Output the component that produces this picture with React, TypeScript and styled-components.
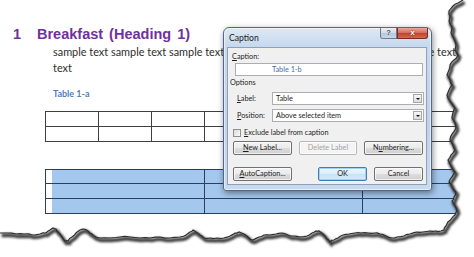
import React from "react";
import styled, { createGlobalStyle } from "styled-components";

const GlobalStyle = createGlobalStyle`
  html, body { margin: 0; padding: 0; background: #fff; }
  body { font-family: Lato, "Liberation Sans", sans-serif; }
`;

type Pt = [number, number];

const rightEdge: Pt[] = [
  [463, 0], [458, 3], [453, 6], [449, 11], [450, 16], [449, 21], [452, 27], [451, 33], [454, 39],
  [456, 45], [455, 50], [458, 55], [454, 60], [450, 65], [449, 70], [447, 75], [450, 80], [452, 85],
  [449, 90], [447, 95], [450, 101], [455, 108], [453, 113], [452, 118], [455, 123], [456, 128],
  [452, 134], [450, 140], [453, 145], [455, 150], [451, 155], [448, 160], [451, 166], [455, 172],
  [452, 177], [449, 182], [452, 187], [456, 192], [454, 197], [452, 201], [455, 206], [457, 211],
  [455, 215], [452, 218], [448, 222], [446, 226], [444, 230], [441, 231],
];

const bottomEdge: Pt[] = [
  [436, 231], [430, 231], [423, 232], [417, 232], [410, 234], [404, 236], [397, 237], [392, 238],
  [386, 236], [380, 234], [375, 233], [368, 233], [361, 233], [355, 233], [349, 234], [343, 235],
  [338, 238], [334, 240], [330, 242], [327, 239], [323, 234], [319, 231], [316, 231], [312, 233],
  [307, 236], [300, 237], [294, 236], [288, 235], [282, 233], [276, 234], [270, 235], [264, 235],
  [259, 237], [253, 240], [249, 238], [244, 234], [239, 232], [235, 233], [230, 236], [224, 238],
  [217, 238], [210, 238], [204, 238], [200, 235], [196, 232], [193, 230], [190, 232], [186, 235],
  [180, 237], [170, 238], [160, 237], [150, 238], [140, 238], [130, 237], [120, 237], [110, 238],
  [100, 238], [96, 237], [92, 234], [88, 231], [84, 229], [80, 230], [76, 233], [72, 237],
  [68, 241], [65, 241], [62, 237], [59, 233], [56, 229], [53, 228], [50, 230], [46, 233],
  [40, 234], [32, 235], [24, 234], [16, 234], [8, 233], [0, 233],
];

// densify with a small deterministic roughness so the edge looks torn
const roughen = (pts: Pt[]): Pt[] => {
  const out: Pt[] = [];
  let seed = 7;
  const rnd = () => {
    seed = (seed * 9301 + 49297) % 233280;
    return seed / 233280 - 0.5;
  };
  for (let i = 0; i < pts.length - 1; i++) {
    const [x1, y1] = pts[i];
    const [x2, y2] = pts[i + 1];
    out.push([x1, y1]);
    out.push([(x1 + x2) / 2 + rnd() * 1.2, (y1 + y2) / 2 + rnd() * 1.2]);
  }
  out.push(pts[pts.length - 1]);
  return out;
};

const edge = roughen([...rightEdge, ...bottomEdge]);
const clipPolygon = `polygon(0px 0px, ${edge.map(([x, y]) => `${x.toFixed(1)}px ${y.toFixed(1)}px`).join(", ")})`;
const edgePath = "M" + edge.map(([x, y]) => `${x.toFixed(1)} ${y.toFixed(1)}`).join(" L");

const Canvas = styled.div`
  position: relative;
  width: 474px;
  height: 257px;
  overflow: hidden;
  background: #fff;
`;

const Paper = styled.div<{ $clip: string }>`
  width: 474px;
  height: 257px;
  box-sizing: border-box;
  padding-top: 25px;
  display: flex;
  flex-direction: column;
  align-items: flex-start;
  background: #fff;
  clip-path: ${(p) => p.$clip};
`;

const Heading = styled.h1`
  margin: 0;
  padding-left: 13px;
  display: flex;
  font: bold 14.5px/18px "Liberation Sans", Arial, sans-serif;
  color: #7030a0;
  word-spacing: 2px;
  white-space: nowrap;
`;

const HeadingNumber = styled.span`
  width: 24px;
`;

const BodyText = styled.p`
  margin: 1px 0 0 53px;
  width: 412px;
  font: 10.9px/16px Lato, "Liberation Sans", sans-serif;
  color: #2e2e2e;
`;

const TableCaption = styled.div`
  margin: 12px 0 0 53px;
  font: bold 9px/12px Lato, "Liberation Sans", sans-serif;
  color: #4f81bd;
`;

const GridTable = styled.div<{ $cols: string; $rows: string; $line: string; $top: number }>`
  display: grid;
  grid-template-columns: ${(p) => p.$cols};
  grid-template-rows: ${(p) => p.$rows};
  gap: 1px;
  padding: 1px;
  margin: ${(p) => p.$top}px 0 0 45px;
  background: ${(p) => p.$line};
`;

const Cell = styled.div<{ $selected?: boolean; $gutter?: boolean }>`
  background: ${(p) =>
    !p.$selected ? "#fff" : p.$gutter ? "linear-gradient(to right, #fff 6px, #a4c7ed 6px)" : "#a4c7ed"};
`;

const TornEdge = styled.svg`
  position: absolute;
  inset: 0;
  pointer-events: none;
`;

/* ---------- dialog ---------- */

const Window = styled.div`
  position: absolute;
  left: 223px;
  top: 27px;
  width: 209px;
  height: 164px;
  box-sizing: border-box;
  padding: 0 4px 5px 3px;
  display: flex;
  flex-direction: column;
  border: 1px solid #50698a;
  border-radius: 6px 6px 3px 3px;
  background: linear-gradient(180deg, #dde8f5 0px, #c7d9ee 18px, #bed2ea 60%, #c9daee 100%);
  box-shadow: inset 0 0 0 1px rgba(255, 255, 255, 0.55), 1px 2px 6px rgba(0, 0, 0, 0.45);
  font: 7.3px/10px Lato, "Liberation Sans", sans-serif;
  color: #1e1e1e;
`;

const TitleBar = styled.div`
  height: 19px;
  display: flex;
  align-items: flex-start;
  justify-content: space-between;
`;

const Title = styled.span`
  margin: 4px 0 0 2px;
  font-size: 8.6px;
  line-height: 12px;
  color: #1b1b1b;
`;

const Controls = styled.div`
  display: flex;
  margin-right: -1px;
`;

const ControlButton = styled.div<{ $close?: boolean }>`
  width: ${(p) => (p.$close ? 31 : 17)}px;
  height: 11px;
  box-sizing: border-box;
  display: flex;
  align-items: center;
  justify-content: center;
  border: 1px solid ${(p) => (p.$close ? "#7d2a1f" : "#6a7d96")};
  border-top: none;
  border-radius: ${(p) => (p.$close ? "0 0 3px 0" : "0 0 0 3px")};
  background: ${(p) =>
    p.$close
      ? "linear-gradient(180deg, #e9a99c 0%, #d8705f 45%, #c4442f 55%, #d06a4f 100%)"
      : "linear-gradient(180deg, #e9eff7 0%, #d2dcea 45%, #b9c8dc 55%, #c9d6e8 100%)"};
  color: ${(p) => (p.$close ? "#fff" : "#3a4a60")};
  font: bold ${(p) => (p.$close ? 8 : 7.5)}px/1 "Liberation Sans", sans-serif;
  text-shadow: ${(p) => (p.$close ? "0 0 2px rgba(80,0,0,0.8)" : "0 0 1px #fff")};
`;

const Client = styled.div`
  flex: 1;
  display: flex;
  flex-direction: column;
  border: 1px solid #8ca1bb;
  background: #f0f0f0;
`;

const FieldLabel = styled.div`
  margin: 4px 0 0 4px;
`;

const TextBox = styled.div`
  margin: 1px 3px 0 7px;
  height: 13px;
  box-sizing: border-box;
  padding-left: 36px;
  border: 1px solid #abadb3;
  background: #fff;
  color: #4a6ea8;
  line-height: 11px;
`;

const GroupLabel = styled.div`
  margin: 2px 0 0 2px;
`;

const OptionRow = styled.div`
  display: grid;
  grid-template-columns: 35px 152px;
  align-items: center;
  margin: 4px 0 0 9px;
  height: 13px;
`;

const Select = styled.div`
  height: 13px;
  box-sizing: border-box;
  display: flex;
  align-items: center;
  justify-content: space-between;
  padding: 0 1px 0 3px;
  border: 1px solid #abadb3;
  background: #fff;
`;

const DropArrow = styled.div`
  width: 9px;
  height: 9px;
  box-sizing: border-box;
  display: flex;
  align-items: center;
  justify-content: center;
  border: 1px solid #a7a7a7;
  background: linear-gradient(180deg, #f7f7f7, #dcdcdc);
  &::after {
    content: "";
    border-left: 2px solid transparent;
    border-right: 2px solid transparent;
    border-top: 2px solid #111;
  }
`;

const CheckRow = styled.div`
  display: flex;
  align-items: center;
  gap: 3px;
  margin: 6px 0 0 5px;
  height: 10px;
`;

const CheckBox = styled.div`
  width: 8px;
  height: 8px;
  box-sizing: border-box;
  border: 1px solid #8e8f8f;
  background: linear-gradient(135deg, #d9d9d9, #fbfbfb);
`;

const ButtonRow = styled.div<{ $top: number }>`
  display: flex;
  align-items: center;
  gap: 7px;
  margin: ${(p) => p.$top}px 3px 0 5px;
`;

const Spacer = styled.div`
  flex: 1;
`;

const Button = styled.div<{ $w: number; $disabled?: boolean; $default?: boolean }>`
  width: ${(p) => p.$w}px;
  height: 14px;
  box-sizing: border-box;
  display: flex;
  align-items: center;
  justify-content: center;
  border: 1px solid ${(p) => (p.$disabled ? "#b5b9bc" : p.$default ? "#3c7fb1" : "#707070")};
  border-radius: 2px;
  background: ${(p) =>
    p.$disabled
      ? "#f4f4f4"
      : p.$default
      ? "linear-gradient(180deg, #eef7fd 0%, #dcedf9 50%, #c7e2f5 50%, #d8ebf8 100%)"
      : "linear-gradient(180deg, #f3f3f3 0%, #ebebeb 50%, #dddddd 50%, #cfcfcf 100%)"};
  box-shadow: ${(p) => (p.$default ? "inset 0 0 0 1px #9fd3f3" : "inset 0 0 0 1px rgba(255,255,255,0.7)")};
  color: ${(p) => (p.$disabled ? "#a3a3a3" : "#1e1e1e")};
  white-space: nowrap;
`;

const Key = styled.span`
  text-decoration: underline;
`;

const CaptionDialog = () => (
  <Window>
    <TitleBar>
      <Title>Caption</Title>
      <Controls>
        <ControlButton>?</ControlButton>
        <ControlButton $close>x</ControlButton>
      </Controls>
    </TitleBar>
    <Client>
      <FieldLabel>
        <Key>C</Key>aption:
      </FieldLabel>
      <TextBox>Table 1-b</TextBox>
      <GroupLabel>Options</GroupLabel>
      <OptionRow>
        <span>
          <Key>L</Key>abel:
        </span>
        <Select>
          <span>Table</span>
          <DropArrow />
        </Select>
      </OptionRow>
      <OptionRow>
        <span>
          <Key>P</Key>osition:
        </span>
        <Select>
          <span>Above selected item</span>
          <DropArrow />
        </Select>
      </OptionRow>
      <CheckRow>
        <CheckBox />
        <span>
          <Key>E</Key>xclude label from caption
        </span>
      </CheckRow>
      <ButtonRow $top={3}>
        <Button $w={59}>
          <Key>N</Key>ew Label...
        </Button>
        <Button $w={58} $disabled>
          Delete Label
        </Button>
        <Button $w={59}>
          N<Key>u</Key>mbering...
        </Button>
      </ButtonRow>
      <ButtonRow $top={12}>
        <Button $w={59}>
          <Key>A</Key>utoCaption...
        </Button>
        <Spacer />
        <Button $w={49} $default>
          OK
        </Button>
        <Button $w={49}>Cancel</Button>
      </ButtonRow>
    </Client>
  </Window>
);

const table1Rows = [0, 1];
const table1Cols = [0, 1, 2, 3, 4, 5, 6, 7];
const table2Rows = [0, 1, 2];
const table2Cols = [0, 1, 2];

export default function App() {
  return (
    <>
      <GlobalStyle />
      <Canvas>
        <Paper $clip={clipPolygon}>
          <Heading>
            <HeadingNumber>1</HeadingNumber>
            <span>Breakfast (Heading 1)</span>
          </Heading>
          <BodyText>
            sample text sample text sample text sample text sample text sample text sample text text
          </BodyText>
          <TableCaption>Table 1-a</TableCaption>
          <GridTable $cols="repeat(8, 52px)" $rows="14px 14px" $line="#3f3f3f" $top={11}>
            {table1Rows.map((r) => table1Cols.map((c) => <Cell key={`${r}-${c}`} />))}
          </GridTable>
          <GridTable $cols="158px 157px 157px" $rows="13px 14px 14px" $line="#2a3f5f" $top={27}>
            {table2Rows.map((r) =>
              table2Cols.map((c) => <Cell key={`${r}-${c}`} $selected $gutter={c === 0} />)
            )}
          </GridTable>
        </Paper>
        <TornEdge width="474" height="257" viewBox="0 0 474 257">
          <defs>
            <filter id="tornShadow" x="-10%" y="-10%" width="120%" height="120%">
              <feGaussianBlur stdDeviation="1.2" />
            </filter>
          </defs>
          <path d={edgePath} fill="none" stroke="#3e3e3e" strokeWidth="3.6" transform="translate(1.6 2.4)" filter="url(#tornShadow)" />
          <path d={edgePath} fill="none" stroke="#2e2e2e" strokeWidth="1.2" />
        </TornEdge>
        <CaptionDialog />
      </Canvas>
    </>
  );
}
